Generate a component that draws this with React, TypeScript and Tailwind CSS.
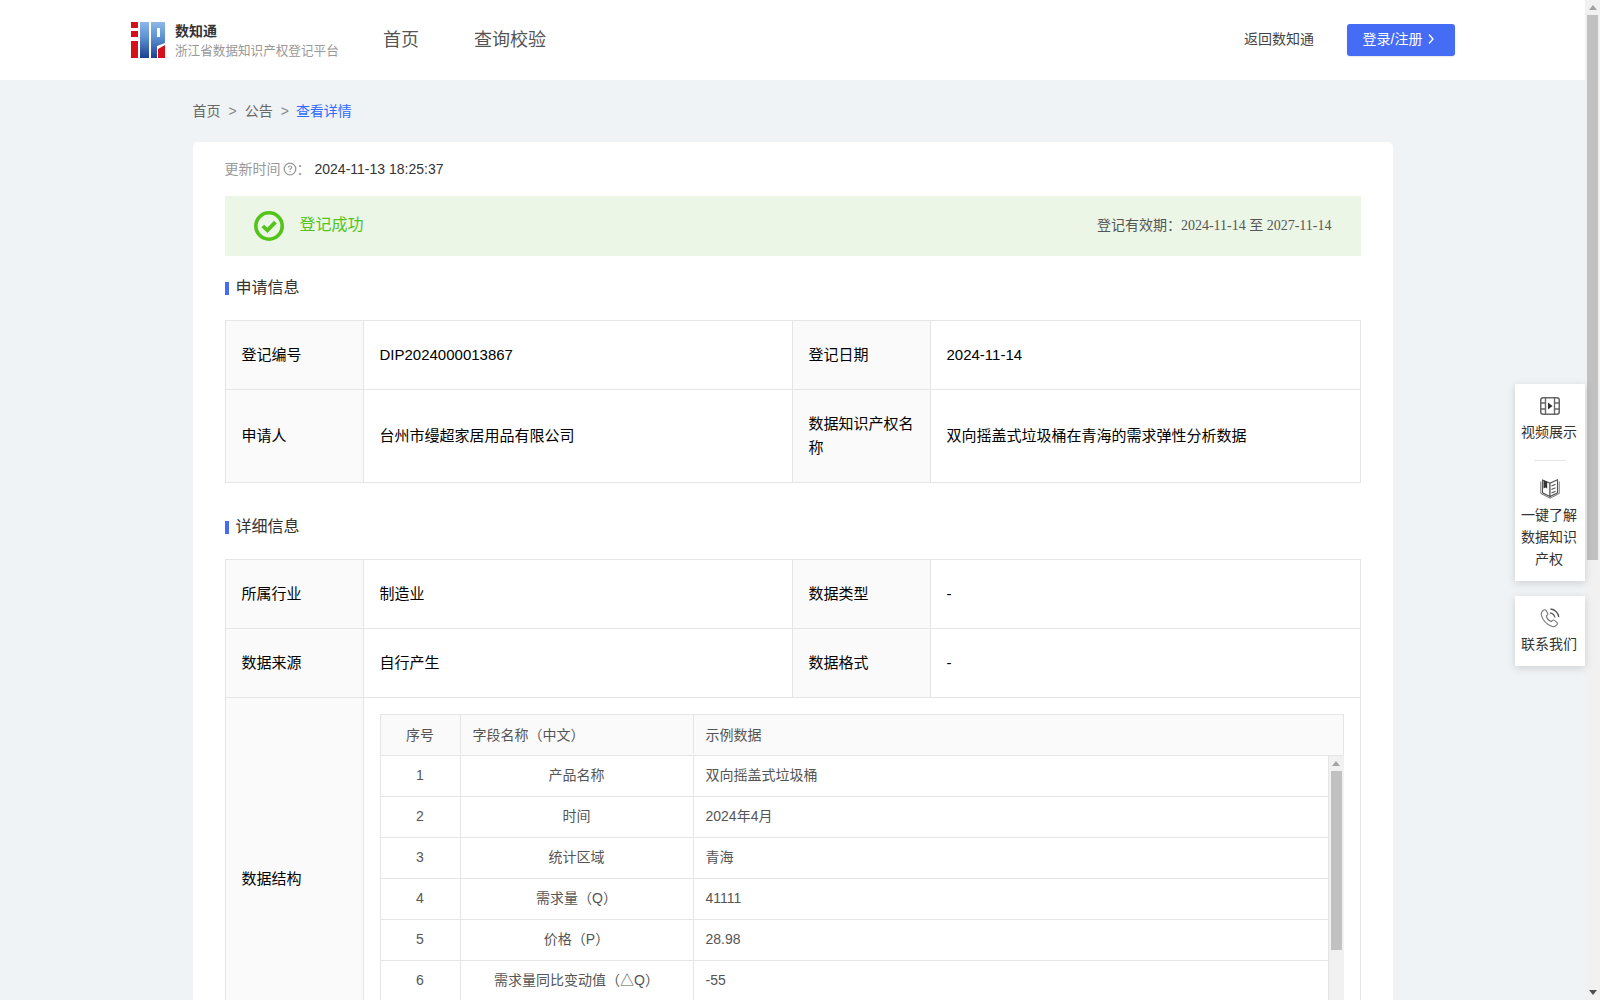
import React from "react";

function Logo() {
  return (
    <svg width="34" height="36" viewBox="0 0 34 36" className="shrink-0">
      <defs>
        <linearGradient id="lg" x1="0" y1="0" x2="0" y2="1">
          <stop offset="0" stopColor="#8db8e8" />
          <stop offset="0.45" stopColor="#5a8fd0" />
          <stop offset="1" stopColor="#1c3f92" />
        </linearGradient>
      </defs>
      <rect x="0" y="0" width="7" height="6" fill="#d5101a" />
      <rect x="0" y="9" width="7" height="6" fill="#d5101a" />
      <rect x="0" y="19" width="7" height="17" fill="#d5101a" />
      <rect x="9" y="0" width="9" height="36" fill="url(#lg)" />
      <path d="M20 0H34V21L26 24V36H20Z" fill="url(#lg)" />
      <rect x="26" y="6" width="3" height="9" fill="#ffffff" />
      <path d="M27 27L34 23V36H27Z" fill="#d5101a" />
    </svg>
  );
}

function FilmIcon() {
  return (
    <svg width="20" height="18" viewBox="0 0 20 18" fill="none">
      <rect x="0.75" y="0.75" width="18.5" height="16.5" rx="2.5" stroke="#666" strokeWidth="1.5" />
      <path d="M5.5 1V17M14.5 1V17M1 6H5.5M1 12H5.5M14.5 6H19M14.5 12H19" stroke="#666" strokeWidth="1.4" />
      <path d="M8 5.6L12.6 9L8 12.4Z" fill="#333" />
    </svg>
  );
}

function BookIcon() {
  return (
    <svg width="20" height="20" viewBox="0 0 20 20" fill="none">
      <path d="M0.8 2.5V14.5L10 19.2L19.2 14.5V2.5" stroke="#777" strokeWidth="1" />
      <path d="M2.5 1L10 4.2V17.6L2.5 13.8Z" fill="#fff" stroke="#555" strokeWidth="1.1" />
      <path d="M17.5 0.8L10 4.2V17.6L17.5 13.8Z" fill="#fff" stroke="#555" strokeWidth="1.1" />
      <path d="M3.5 1.2L7.2 2.8V9.5L5.4 8.5L3.5 9.5Z" fill="#333" />
      <path d="M11.5 7L15.5 5.2M11.5 10.5L15.5 8.7M11.5 14L15.5 12.2" stroke="#555" strokeWidth="1.1" />
    </svg>
  );
}

function PhoneIcon() {
  return (
    <svg width="20" height="20" viewBox="0 0 20 20" fill="none">
      <path
        d="M3 2.5C4 1.5 5.5 1.6 6.1 2.6L7.6 5.2C8 5.9 7.8 6.7 7.2 7.2L6.3 8C6.9 10.4 8.8 12.6 11.3 13.6L12.2 12.6C12.8 12 13.7 11.9 14.4 12.4L16.6 14.1C17.5 14.8 17.6 16.2 16.7 17.1C15.4 18.5 13.4 19 11.5 18.2C6.6 16.2 2.7 11.8 1.4 7.4C0.9 5.6 1.6 3.8 3 2.5Z"
        stroke="#777"
        strokeWidth="1.1"
      />
      <path d="M10 5C12.4 5.2 14.4 7 14.8 9.5" stroke="#666" strokeWidth="1.3" />
      <path d="M10.5 1C14.8 1.3 18.2 4.6 18.8 9" stroke="#555" strokeWidth="1.3" />
    </svg>
  );
}

function ArrowUp({ color }: { color: string }) {
  return (
    <svg width="8" height="5" viewBox="0 0 8 5">
      <path d="M4 0L8 5H0Z" fill={color} />
    </svg>
  );
}

function ArrowDown({ color }: { color: string }) {
  return (
    <svg width="8" height="5" viewBox="0 0 8 5">
      <path d="M4 5L8 0H0Z" fill={color} />
    </svg>
  );
}

function SectionTitle({ text }: { text: string }) {
  return (
    <div className="flex h-6 items-center">
      <span className="mt-[1px] h-[13px] w-1 bg-[#456cf4]" />
      <span className="ml-[7px] text-base leading-6 text-[#333]">{text}</span>
    </div>
  );
}

function Label({ children }: { children: React.ReactNode }) {
  return (
    <div className="flex items-center border-r border-b border-[#e5e5e5] bg-[#fafafa] py-[22px] pl-4 pr-[15px] text-[15px] leading-6 text-black">
      <span>{children}</span>
    </div>
  );
}

function Value({ children }: { children: React.ReactNode }) {
  return (
    <div className="flex items-center border-r border-b border-[#e5e5e5] px-4 py-[22px] text-[15px] leading-6 text-black">
      <span>{children}</span>
    </div>
  );
}

const rows: [string, string, string][] = [
  ["1", "产品名称", "双向摇盖式垃圾桶"],
  ["2", "时间", "2024年4月"],
  ["3", "统计区域", "青海"],
  ["4", "需求量（Q）", "41111"],
  ["5", "价格（P）", "28.98"],
  ["6", "需求量同比变动值（△Q）", "-55"],
];

function FieldTable() {
  return (
    <div className="flex h-[329px] w-[964px] flex-col overflow-hidden text-sm text-[#555]">
      <div className="grid h-[42px] shrink-0 grid-cols-[80px_233px_1fr] border border-[#e5e5e5] bg-[#fafafa] pb-[1px]">
        <div className="flex items-center justify-center border-r border-[#e5e5e5]">序号</div>
        <div className="flex items-center border-r border-[#e5e5e5] pl-3">字段名称（中文）</div>
        <div className="flex items-center pl-3">示例数据</div>
      </div>
      <div className="flex min-h-0 flex-1">
        <div className="min-w-0 flex-1 overflow-hidden border-l border-[#e5e5e5]">
          {rows.map((r) => (
            <div key={r[0]} className="grid h-[41px] grid-cols-[80px_233px_1fr] border-r border-b border-[#e5e5e5]">
              <div className="flex items-center justify-center border-r border-[#e5e5e5] pb-[2px]">{r[0]}</div>
              <div className="flex items-center justify-center border-r border-[#e5e5e5] pb-[2px]">{r[1]}</div>
              <div className="flex items-center pb-[2px] pl-3">{r[2]}</div>
            </div>
          ))}
        </div>
        <div className="flex w-[15px] shrink-0 flex-col items-center bg-[#f1f1f1]">
          <div className="flex h-[15px] items-center justify-center">
            <ArrowUp color="#a3a3a3" />
          </div>
          <div className="h-[179px] w-[11px] bg-[#c1c1c1]" />
        </div>
      </div>
    </div>
  );
}

function SideItem({ icon, lines }: { icon: React.ReactNode; lines: string[] }) {
  return (
    <div className="flex flex-col items-center text-sm leading-[22px] text-[#333]">
      <div className="mb-[5px] flex h-5 items-center justify-center">{icon}</div>
      {lines.map((l) => (
        <div key={l} className="pr-[2px]">
          {l}
        </div>
      ))}
    </div>
  );
}

export default function App() {
  return (
    <div className="relative flex h-screen w-full overflow-hidden bg-[#eff3f6] font-['Liberation_Sans','Noto_Sans_CJK_SC',sans-serif]">
      <div className="w-[1585px] shrink-0">
        <header className="flex h-20 items-center bg-white pl-[131px] pr-[130px]">
          <Logo />
          <div className="ml-[10px] flex w-[208px] flex-col">
            <span className="text-sm font-bold leading-5 text-[#333]">数知通</span>
            <span className="mt-[1px] text-[12.6px] leading-[18px] text-[#999]">浙江省数据知识产权登记平台</span>
          </div>
          <nav className="flex items-center gap-[55px] text-lg text-[#555]">
            <span>首页</span>
            <span>查询校验</span>
          </nav>
          <div className="ml-auto flex items-center gap-[33px]">
            <span className="pb-[2px] text-sm text-[#444]">返回数知通</span>
            <button className="flex h-8 w-[108px] items-center justify-center gap-[5px] rounded-[3px] bg-[#456cf4] pb-[2px] pr-[4px] text-sm text-white shadow-[0_1px_2px_rgba(0,0,0,0.1)]">
              登录/注册
              <svg width="8" height="12" viewBox="0 0 8 12" fill="none">
                <path d="M2 1.5L6 6L2 10.5" stroke="#fff" strokeWidth="1.4" />
              </svg>
            </button>
          </div>
        </header>

        <main className="mx-auto w-[1200px]">
          <div className="flex h-[62px] items-center text-sm text-[#666]">
            <span>首页</span>
            <span className="mx-2 text-[#888]">&gt;</span>
            <span>公告</span>
            <span className="ml-2 mr-[7px] text-[#888]">&gt;</span>
            <span className="text-[#2f6bff]">查看详情</span>
          </div>

          <section className="rounded-t-[5px] bg-white px-8 pb-8 pt-[15px]">
            <div className="flex h-6 items-center text-sm">
              <span className="text-[#999]">更新时间</span>
              <svg width="14" height="14" viewBox="0 0 14 14" fill="none" className="ml-[2px]">
                <circle cx="7" cy="7" r="5.8" stroke="#999" strokeWidth="1.3" />
                <path d="M5.3 5.5C5.3 4.5 6 4 7 4C8 4 8.7 4.6 8.7 5.4C8.7 6.5 7 6.6 7 8" stroke="#999" strokeWidth="1.1" />
                <circle cx="7" cy="9.8" r="0.7" fill="#999" />
              </svg>
              <span className="text-[#999]">：</span>
              <span className="ml-[4px] text-[#333]">2024-11-13 18:25:37</span>
            </div>

            <div className="mt-[15px] flex h-[60px] items-center bg-[#ecf6e6] pl-[29px] pr-[29px]">
              <svg width="30" height="30" viewBox="0 0 30 30" fill="none">
                <circle cx="15" cy="15" r="13.2" stroke="#52c41a" strokeWidth="3.6" />
                <path d="M8.8 15L13.4 19.4L21.4 11.2" stroke="#52c41a" strokeWidth="3.8" />
              </svg>
              <span className="ml-[16px] pb-[2px] text-base text-[#52c41a]">登记成功</span>
              <span className="ml-auto pb-[2px] text-sm text-[#555]">
                登记有效期：
                <span className="font-['Liberation_Serif','Noto_Sans_CJK_SC',serif]">2024-11-14 至 2027-11-14</span>
              </span>
            </div>

            <div className="mt-5">
              <SectionTitle text="申请信息" />
            </div>
            <div className="mt-5 grid grid-cols-[138px_429px_138px_1fr] border-l border-t border-[#e5e5e5]">
              <Label>登记编号</Label>
              <Value>DIP2024000013867</Value>
              <Label>登记日期</Label>
              <Value>2024-11-14</Value>
              <Label>申请人</Label>
              <Value>台州市缦超家居用品有限公司</Value>
              <Label>数据知识产权名称</Label>
              <Value>双向摇盖式垃圾桶在青海的需求弹性分析数据</Value>
            </div>

            <div className="mt-8">
              <SectionTitle text="详细信息" />
            </div>
            <div className="mt-5 grid grid-cols-[138px_429px_138px_1fr] border-l border-t border-[#e5e5e5]">
              <Label>所属行业</Label>
              <Value>制造业</Value>
              <Label>数据类型</Label>
              <Value>-</Value>
              <Label>数据来源</Label>
              <Value>自行产生</Value>
              <Label>数据格式</Label>
              <Value>-</Value>
              <Label>数据结构</Label>
              <div className="col-span-3 border-r border-b border-[#e5e5e5] p-4">
                <FieldTable />
              </div>
            </div>
          </section>
        </main>
      </div>

      <div className="flex h-full w-[15px] shrink-0 flex-col items-center bg-[#f1f1f1]">
        <div className="flex h-[15px] items-center justify-center">
          <ArrowUp color="#a3a3a3" />
        </div>
        <div className="h-[545px] w-[11px] bg-[#c1c1c1]" />
        <div className="mt-auto flex h-[15px] items-center justify-center">
          <ArrowDown color="#505050" />
        </div>
      </div>

      <aside className="absolute right-[15px] top-[384px] w-[70px]">
        <div className="flex h-[197px] flex-col items-center bg-white pt-[12px] shadow-[0_2px_8px_rgba(0,0,0,0.15)]">
          <SideItem icon={<FilmIcon />} lines={["视频展示"]} />
          <div className="mb-[18px] mt-[17px] h-px w-8 bg-[#e5e5e5]" />
          <SideItem icon={<BookIcon />} lines={["一键了解", "数据知识", "产权"]} />
        </div>
        <div className="mt-[15px] flex h-[70px] flex-col items-center bg-white pt-[12px] shadow-[0_2px_8px_rgba(0,0,0,0.15)]">
          <SideItem icon={<PhoneIcon />} lines={["联系我们"]} />
        </div>
      </aside>
    </div>
  );
}
